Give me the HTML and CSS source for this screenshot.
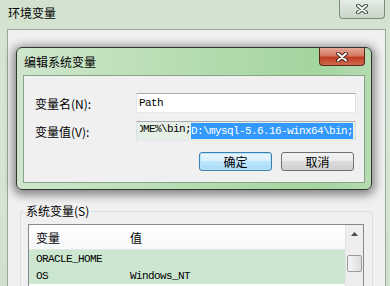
FILE: index.html
```html
<!DOCTYPE html>
<html lang="zh-CN">
<head>
  <meta charset="UTF-8">
  <title>环境变量</title>
  <link rel="stylesheet" href="styles.css">
</head>
<body>
  <div class="window">
    <div class="titlebar">
      <span class="title">环境变量</span>
      <div class="close close-inactive">
        <svg width="12" height="10" viewBox="0 0 12 10"><path d="M2 1.5 L10 8.5 M10 1.5 L2 8.5" stroke="#3a4a40" stroke-width="4" stroke-linecap="round"/><path d="M2 1.5 L10 8.5 M10 1.5 L2 8.5" stroke="#fff" stroke-width="2" stroke-linecap="round"/></svg>
      </div>
    </div>
    <div class="client">
      <fieldset class="group">
        <legend>系统变量(S)</legend>
        <div class="listbox">
          <div class="list">
            <div class="list-head">
              <span class="col-name">变量</span>
              <span class="col-value">值</span>
            </div>
            <div class="row">
              <span class="col-name">ORACLE_HOME</span>
              <span class="col-value"></span>
            </div>
            <div class="row">
              <span class="col-name">OS</span>
              <span class="col-value">Windows_NT</span>
            </div>
            <div class="row plain"></div>
          </div>
          <div class="scrollbar">
            <div class="scroll-up">
              <svg width="7" height="4" viewBox="0 0 7 4"><path d="M0 4 L3.5 0 L7 4 Z" fill="#4d4d4d"/></svg>
            </div>
            <div class="track">
              <div class="thumb"></div>
            </div>
          </div>
        </div>
      </fieldset>
    </div>

    <!-- 编辑对话框 -->
    <div class="dialog">
      <div class="dialog-titlebar">
        <span class="title">编辑系统变量</span>
        <div class="close close-active">
          <svg width="12" height="10" viewBox="0 0 12 10"><path d="M2 1.5 L10 8.5 M10 1.5 L2 8.5" stroke="#4a2418" stroke-width="4" stroke-linecap="round"/><path d="M2 1.5 L10 8.5 M10 1.5 L2 8.5" stroke="#fff" stroke-width="2" stroke-linecap="round"/></svg>
        </div>
      </div>
      <div class="dialog-client">
        <div class="form-row">
          <label class="form-label">变量名(N):</label>
          <div class="field">
            <span>Path</span>
          </div>
        </div>
        <div class="form-row">
          <label class="form-label">变量值(V):</label>
          <div class="field field-value">
            <div class="field-scroll">
              <span>%JAVA_HOME%\bin;</span><span class="sel">D:\mysql-5.6.16-winx64\bin;</span>
            </div>
          </div>
        </div>
        <div class="buttons">
          <div class="btn btn-default">确定</div>
          <div class="btn">取消</div>
        </div>
      </div>
    </div>
  </div>
</body>
</html>
```

FILE: styles.css
```css
body {
  margin: 0;
  width: 390px;
  height: 286px;
  overflow: hidden;
  font-family: "Noto Sans CJK SC", "Liberation Sans", sans-serif;
  font-size: 12px;
  color: #000;
}
.window {
  position: relative;
  width: 390px;
  height: 286px;
  overflow: hidden;
  background: linear-gradient(to bottom, #d2e2cf, #d8e7d5 40%, #cfe1cc);
}
.titlebar {
  height: 29px;
  display: flex;
  justify-content: space-between;
  align-items: flex-start;
}
.titlebar .title {
  margin: 5px 0 0 8px;
  line-height: 16px;
}
.close {
  width: 46px;
  height: 18px;
  box-sizing: border-box;
  display: flex;
  align-items: center;
  justify-content: center;
  border-radius: 0 0 4px 4px;
}
.close-inactive {
  margin-right: 5px;
  height: 19px;
  border: 1px solid #7d8c7f;
  border-top: none;
  background: linear-gradient(to bottom, #e6ede5, #d6e0d5 50%, #c9d6c8);
}
.close-active {
  border: 1px solid #5a261b;
  border-top: none;
  background: linear-gradient(to bottom, #e4a897, #d47a62 45%, #bf3d22 55%, #cf6a4f);
}
.client {
  margin: 0 4px 0 7px;
  height: 257px;
  box-sizing: border-box;
  border-top: 1px solid #98a898;
  border-left: 1px solid #98a898;
  border-right: 1px solid #98a898;
  background: #f0f0f0;
  padding: 173px 12px 0 12px;
  overflow: hidden;
}
.group {
  margin: 0;
  border: 1px solid #d5dfe5;
  border-radius: 3px;
  padding: 5px 8px 0 7px;
}
.group legend {
  margin-left: -4px;
  padding: 0 2px;
  line-height: 16px;
}
.listbox {
  display: flex;
  height: 80px;
  border: 1px solid #828790;
  background: #fff;
}
.list {
  flex: 1;
}
.list-head {
  display: flex;
  align-items: center;
  height: 24px;
  border-bottom: 1px solid #e5e5e5;
  background: linear-gradient(to bottom, #fff, #f7f8fa);
}
.col-name {
  width: 94px;
  padding-left: 7px;
}
.col-value {
  flex: 1;
}
.row {
  display: flex;
  align-items: center;
  height: 17px;
  background: #cde6cf;
  font-family: "Liberation Mono", monospace;
  font-size: 11px;
  letter-spacing: -0.6px;
}
.row.plain {
  background: #fff;
}
.scrollbar {
  width: 17px;
  display: flex;
  flex-direction: column;
  background: #eeeeee;
  border-left: 1px solid #e3e3e3;
}
.scroll-up {
  height: 17px;
  display: flex;
  align-items: center;
  justify-content: center;
}
.track {
  flex: 1;
  padding: 13px 1px 0 1px;
}
.thumb {
  height: 15px;
  border: 1px solid #9a9a9a;
  border-radius: 2px;
  background: linear-gradient(to right, #f5f5f5, #dedede);
}

/* 编辑对话框 */
.dialog {
  position: absolute;
  left: 16px;
  top: 47px;
  width: 356px;
  height: 143px;
  box-sizing: border-box;
  border: 1px solid #2c3a2e;
  border-radius: 6px;
  padding: 0 6px 6px 6px;
  background: linear-gradient(to right, #cfe6cc, #b3dbae 55%, #a3d59e 85%, #b6dbb2);
  box-shadow: 0 2px 10px 3px rgba(0, 0, 0, 0.45);
  display: flex;
  flex-direction: column;
}
.dialog-titlebar {
  height: 27px;
  display: flex;
  justify-content: space-between;
  align-items: flex-start;
}
.dialog-titlebar .title {
  margin: 6px 0 0 1px;
  line-height: 16px;
}
.dialog-client {
  flex: 1;
  border: 1px solid #86a486;
  background: #f0f0f0;
  padding: 17px 8px 0 11px;
  display: flex;
  flex-direction: column;
  gap: 8px;
}
.form-row {
  display: flex;
  align-items: center;
  height: 20px;
}
.form-label {
  width: 101px;
}
.field {
  width: 220px;
  height: 20px;
  box-sizing: border-box;
  border: 1px solid #abadb3;
  border-color: #abadb3 #dbdfe6 #e3e9ef #e2e3ea;
  background: #fff;
  display: flex;
  align-items: center;
  padding: 0 2px;
  overflow: hidden;
  white-space: nowrap;
  font-family: "Liberation Mono", monospace;
  font-size: 11px;
  letter-spacing: -0.6px;
}
.field-value {
  padding: 0 2px 0 3px;
  background: #e6efe5;
}
.field-scroll {
  flex: 1;
  display: flex;
  justify-content: flex-end;
  overflow: hidden;
}
.field-scroll span {
  flex-shrink: 0;
}
.sel {
  background: #3399ff;
  color: #fff;
  line-height: 16px;
}
.buttons {
  display: flex;
  justify-content: flex-end;
  gap: 9px;
  margin-top: 3px;
  padding-right: 2px;
}
.btn {
  width: 73px;
  height: 19px;
  box-sizing: border-box;
  border: 1px solid #707070;
  border-radius: 3px;
  background: linear-gradient(to bottom, #f2f2f2, #ebebeb 50%, #dddddd 50%, #cfcfcf);
  display: flex;
  align-items: center;
  justify-content: center;
}
.btn-default {
  border-color: #3c7fb1;
  background: linear-gradient(to bottom, #eaf6fd, #d9f0fc 50%, #bee6fd 50%, #a7d9f5);
  box-shadow: inset 0 0 0 1px #b5e4f9;
}
```
